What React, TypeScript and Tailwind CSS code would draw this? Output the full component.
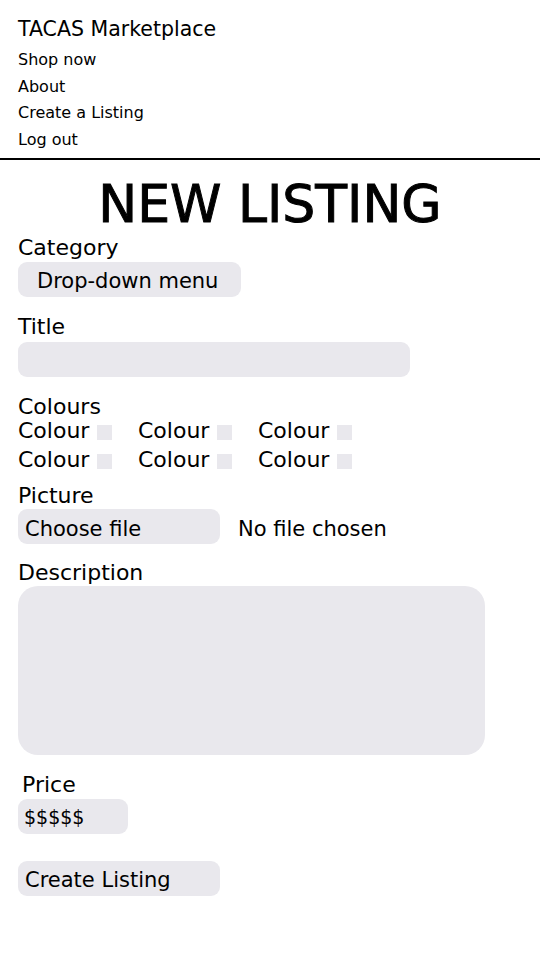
const Label = ({ children, className = "" }: { children: React.ReactNode; className?: string }) => (
  <div className={`text-[22px] leading-[26px] ${className}`}>{children}</div>
);

function ColourOption() {
  return (
    <div className="flex items-start">
      <span>Colour</span>
      <span className="ml-[8px] mt-[7px] h-[15px] w-[15px] bg-[#e9e8ed]" />
    </div>
  );
}

export default function App() {
  return (
    <div className="min-h-[960px] bg-white text-black font-['DejaVu_Sans',sans-serif]">
      <header className="pl-[18px] pt-[15px]">
        <div className="text-[20.5px] leading-[28px]">TACAS Marketplace</div>
        <nav className="mt-[4px] flex flex-col text-[16px] leading-[26.5px]">
          <a href="#">Shop now</a>
          <a href="#">About</a>
          <a href="#">Create a Listing</a>
          <a href="#">Log out</a>
        </nav>
      </header>
      <div className="mt-[5px] h-[2px] bg-black" />

      <main className="px-[18px]">
        <h1 className="mt-[14px] text-center text-[52px] leading-[60px] [-webkit-text-stroke:1px_black]">
          NEW LISTING
        </h1>

        <Label className="mt-px">Category</Label>
        <div className="mt-px flex h-[35px] w-[223px] items-center rounded-[9px] bg-[#e9e8ed] pl-[19px] pt-[4px] text-[21px]">
          Drop-down menu
        </div>

        <Label className="mt-[17px]">Title</Label>
        <div className="mt-[2px] h-[35px] w-[392px] rounded-[9px] bg-[#e9e8ed]" />

        <Label className="mt-[17px] leading-[19px]">Colours</Label>
        <div className="-mt-[2px] grid w-[360px] grid-cols-3 gap-y-[3px] text-[22px] leading-[26px]">
          <ColourOption />
          <ColourOption />
          <ColourOption />
          <ColourOption />
          <ColourOption />
          <ColourOption />
        </div>

        <Label className="mt-[10px]">Picture</Label>
        <div className="flex h-[35px] items-center text-[21px] leading-[26px]">
          <button className="flex h-[35px] w-[202px] items-center rounded-[9px] bg-[#e9e8ed] pl-[7px] pt-[4px] text-left">
            Choose file
          </button>
          <span className="ml-[18px] pt-[4px]">No file chosen</span>
        </div>

        <Label className="mt-[16px]">Description</Label>
        <div className="h-[169px] w-[467px] rounded-[20px] bg-[#e9e8ed]" />

        <Label className="mt-[17px] pl-[4px]">Price</Label>
        <div className="mt-px flex h-[35px] w-[110px] items-center rounded-[9px] bg-[#e9e8ed] pl-[6px] pt-[2px] text-[19px]">
          $$$$$
        </div>

        <button className="mt-[27px] flex h-[35px] w-[202px] items-center rounded-[9px] bg-[#e9e8ed] pl-[7px] pt-[5px] text-left text-[21px]">
          Create Listing
        </button>
      </main>
    </div>
  );
}
